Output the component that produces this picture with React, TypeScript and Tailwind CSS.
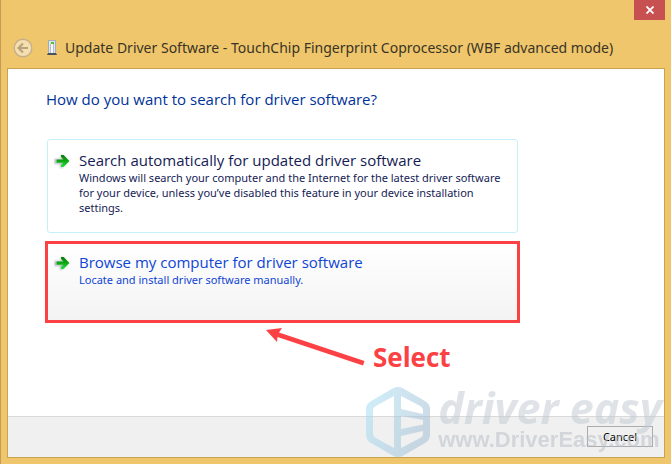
import type { ReactNode } from "react";

type CommandLinkProps = {
  title: string;
  className: string;
  children: ReactNode;
};

function GreenArrow() {
  return (
    <svg viewBox="0 0 16 16" className="mt-[3px] size-4 shrink-0" aria-hidden="true">
      <defs>
        <linearGradient id="green" x1="0" y1="0" x2="0" y2="1">
          <stop offset="0" stopColor="#087d08" />
          <stop offset="0.5" stopColor="#0ca812" />
          <stop offset="1" stopColor="#1ee83a" />
        </linearGradient>
        <filter id="soft" x="-40%" y="-40%" width="180%" height="180%">
          <feGaussianBlur stdDeviation="1" />
        </filter>
      </defs>
      <path d="M0 6h7V2h2l5 6-6 7H6v-4H0z" fill="#9aa0a8" opacity="0.7" filter="url(#soft)" />
      <path d="M2.6 6.4H9.4L7 3.8V2H9.6L15.4 8l-5.8 6H7V12.2L9.4 9.7H2.6z" fill="url(#green)" />
    </svg>
  );
}

function CommandLink({ title, className, children }: CommandLinkProps) {
  return (
    <button type="button" className={`flex items-start text-left ${className}`}>
      <GreenArrow />
      <span className="ml-[9px] block">
        <span className="block text-[15px] leading-5">{title}</span>
        <span className="block font-['Noto_Sans',sans-serif] text-[11px] leading-[15px]">{children}</span>
      </span>
    </button>
  );
}

function DeviceIcon() {
  return (
    <svg viewBox="0 0 12 16" className="h-4 w-3 shrink-0" aria-hidden="true">
      <rect x="2.5" y="0.5" width="7" height="13" fill="#dde5ec" stroke="#a3adb6" />
      <rect x="5" y="4" width="2" height="9" fill="#f5f8fa" />
      <path d="M4.5 4v9M7.5 4v9" stroke="#a9b3bb" strokeWidth="0.8" />
      <rect x="5" y="2" width="3" height="2" fill="#4ac52c" />
      <path d="M2 13h8l1 2H1z" fill="#46525e" />
    </svg>
  );
}

function Watermark() {
  return (
    <div
      className="pointer-events-none absolute right-0 bottom-0 flex items-center gap-2 pr-[2px] opacity-50"
      aria-hidden="true"
    >
      <svg viewBox="0 0 64 70" className="h-[70px] w-16 shrink-0">
        <defs>
          <linearGradient id="hex" x1="0" y1="0" x2="1" y2="0.3">
            <stop offset="0" stopColor="#9fe0f6" />
            <stop offset="1" stopColor="#9dbcd3" />
          </linearGradient>
        </defs>
        <path
          d="M27 1.3Q32-1.2 37 1.3L59 14Q64 17 64 22V48Q64 53 59 56L37 68.7Q32 71.2 27 68.7L5 56Q0 53 0 48V22Q0 17 5 14ZM28 9L9 19.5Q7 21 7 23.5V46.5Q7 49 9 50.5L28 61ZM35 9V22L57 27V23.5Q57 21 55 19.5ZM35 29V42L57 37.5V33ZM35 49V61L55 50.5Q57 49 57 46.5V44Z"
          fill="url(#hex)"
          fillRule="evenodd"
        />
      </svg>
      <div className="whitespace-nowrap">
        <p className="font-['Open_Sans','Noto_Sans',sans-serif] text-[43px] leading-9 font-bold text-[#c0c9d1] italic">
          driver easy
        </p>
        <p className="font-['Liberation_Sans',sans-serif] text-[22px] leading-7 font-bold text-[#b5bbc4]">
          www.DriverEasy.com
        </p>
      </div>
    </div>
  );
}

export default function App() {
  return (
    <div className="flex min-h-screen flex-col border-l border-[#c49c55] bg-[#efc66b] pr-[6px] pb-[6px] pl-[6px] font-['Open_Sans','Noto_Sans',sans-serif]">
      <header className="flex h-[68px] flex-col">
        <button
          type="button"
          aria-label="Close"
          className="flex h-5 w-[31px] shrink-0 items-center justify-center self-end bg-[#c75050]"
        >
          <svg viewBox="0 0 8 8" className="size-2" aria-hidden="true">
            <path d="M0.5 0.5l7 7M7.5 0.5l-7 7" stroke="#fff" strokeWidth="1.8" />
          </svg>
        </button>
        <div className="flex items-center pt-4 pl-[6px]">
          <button type="button" aria-label="Back" className="size-5 shrink-0">
            <svg viewBox="0 0 20 20" className="size-5" aria-hidden="true">
              <circle cx="10" cy="10" r="8.8" fill="#f6dfae" stroke="#c4b08a" strokeWidth="1.4" />
              <path d="M15 10H6M10 5.5L5.5 10l4.5 4.5" fill="none" stroke="#b8a37d" strokeWidth="2.2" />
            </svg>
          </button>
          <div className="ml-[13px] flex items-center gap-[7px]">
            <DeviceIcon />
            <h1 className="font-['Noto_Sans',sans-serif] text-[14px] leading-6 whitespace-nowrap text-[#3a3426]">
              Update Driver Software - TouchChip Fingerprint Coprocessor (WBF advanced mode)
            </h1>
          </div>
        </div>
      </header>

      <div className="relative flex flex-1 flex-col border border-[#c9a44f] bg-white">
        <main className="flex flex-1 flex-col pt-[18px] pr-36 pl-[37px]">
          <h2 className="pl-px text-[15px] leading-6 text-[#003399]">
            How do you want to search for driver software?
          </h2>
          <CommandLink
            title="Search automatically for updated driver software"
            className="mx-[2px] mt-7 rounded-[3px] border border-[#c5effa] px-[6px] pt-[10px] pb-[17px] text-[#151c55]"
          >
            Windows will search your computer and the Internet for the latest driver software for your
            device, unless you’ve disabled this feature in your device installation settings.
          </CommandLink>
          <CommandLink
            title="Browse my computer for driver software"
            className="mt-2 h-[82px] border-[3px] border-[#fb4143] bg-linear-to-b from-white to-[#f3f3f3] px-[6px] pt-2 text-[#0f45d5]"
          >
            Locate and install driver software manually.
          </CommandLink>
          <div className="flex pt-1 pl-[220px]">
            <svg viewBox="0 0 100 40" className="h-10 w-[100px] shrink-0" aria-hidden="true">
              <path d="M1 3L17 1l-3 4.5L99.5 34l-1.5 4.5L12.5 10l-.5 5z" fill="#fb4143" />
            </svg>
            <p className="mt-[14px] ml-2 text-[26px] leading-8 font-bold text-[#fb4143]">Select</p>
          </div>
        </main>
        <footer className="flex justify-end border-t border-[#dadada] bg-[#f0f0f0] pt-[9px] pr-[11px] pb-[10px]">
          <button
            type="button"
            className="h-[21px] w-[66px] border border-[#acacac] bg-[#f0f0f0] font-['Noto_Sans',sans-serif] text-[11px] leading-4 text-black"
          >
            Cancel
          </button>
        </footer>
        <Watermark />
      </div>
    </div>
  );
}
